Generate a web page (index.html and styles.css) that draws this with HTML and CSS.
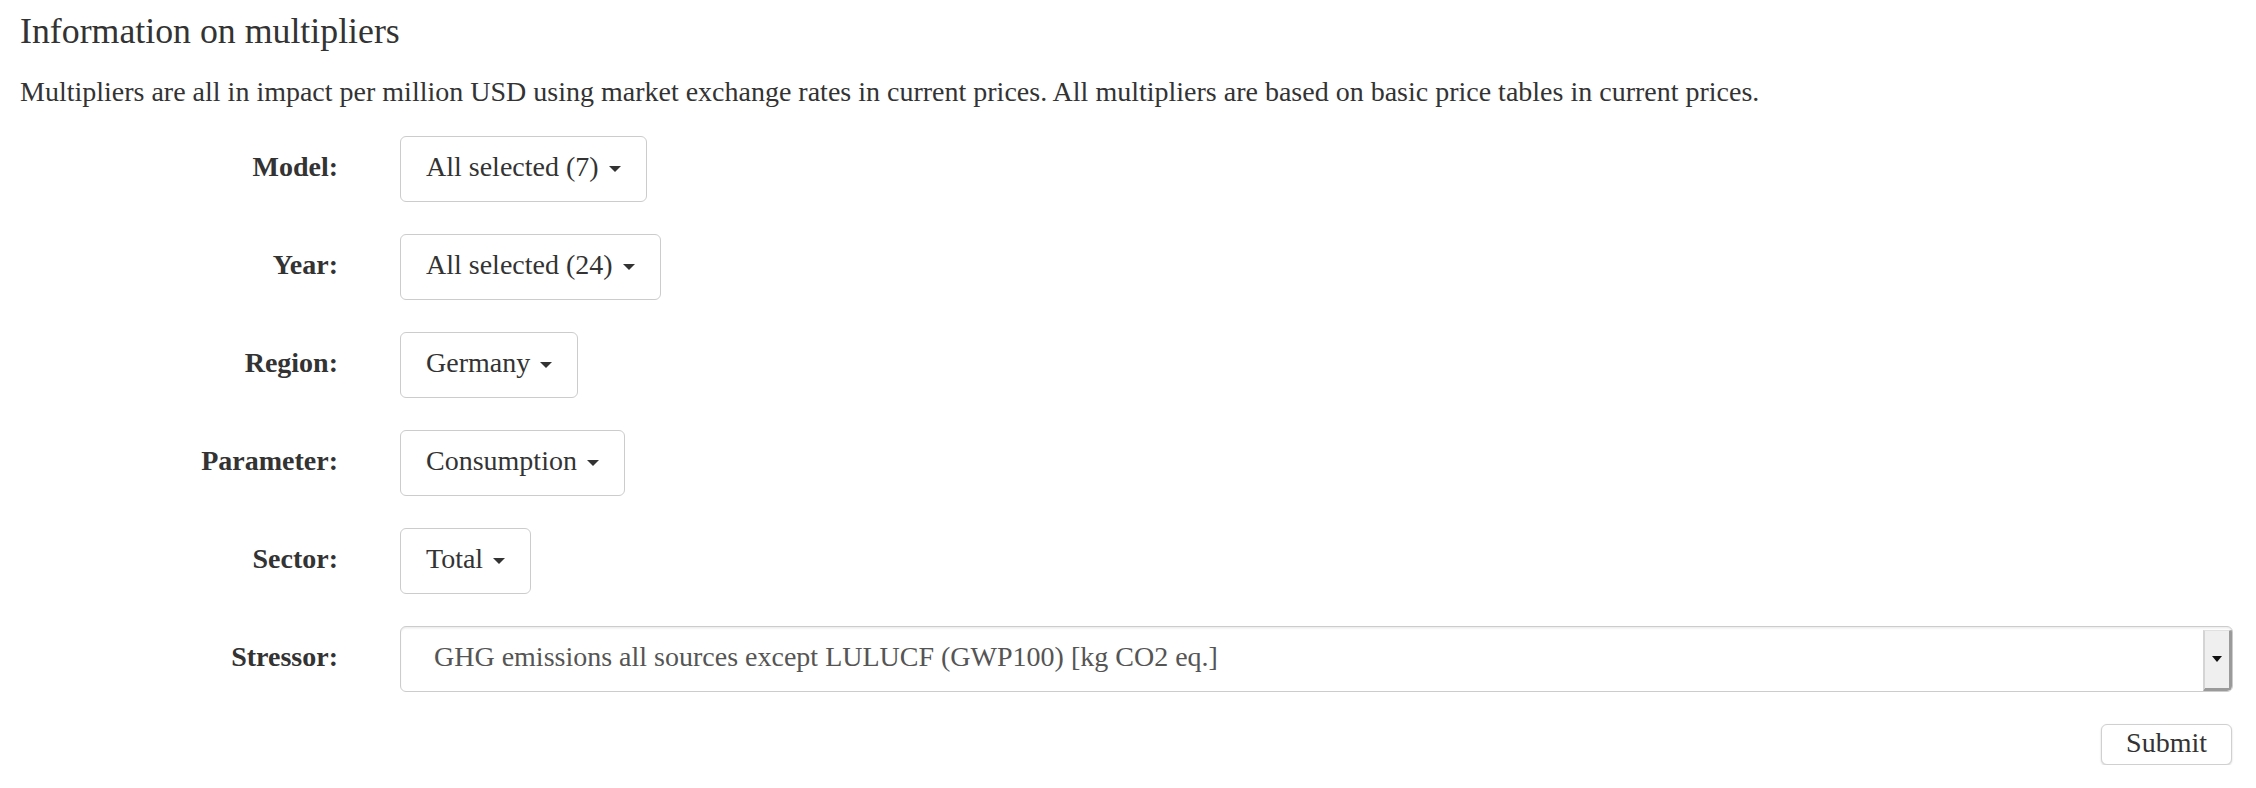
FILE: index.html
```html
<!DOCTYPE html>
<html lang="en">
<head>
<meta charset="utf-8">
<title>Information on multipliers</title>
<link rel="stylesheet" href="styles.css">
</head>
<body>
<div class="page">
  <h3 class="title">Information on multipliers</h3>
  <p class="intro">Multipliers are all in impact per million USD using market exchange rates in current prices. All multipliers are based on basic price tables in current prices.</p>
  <form class="form">
    <div class="row">
      <label class="label">Model:</label>
      <div class="control"><button type="button" class="dd">All selected (7)<span class="caret"></span></button></div>
    </div>
    <div class="row">
      <label class="label">Year:</label>
      <div class="control"><button type="button" class="dd">All selected (24)<span class="caret"></span></button></div>
    </div>
    <div class="row">
      <label class="label">Region:</label>
      <div class="control"><button type="button" class="dd">Germany<span class="caret"></span></button></div>
    </div>
    <div class="row">
      <label class="label">Parameter:</label>
      <div class="control"><button type="button" class="dd">Consumption<span class="caret"></span></button></div>
    </div>
    <div class="row">
      <label class="label">Sector:</label>
      <div class="control"><button type="button" class="dd">Total<span class="caret"></span></button></div>
    </div>
    <div class="row">
      <label class="label">Stressor:</label>
      <div class="control">
        <div class="select">
          <span class="select-text">GHG emissions all sources except LULUCF (GWP100) [kg CO2 eq.]</span>
          <span class="select-arrow"><span class="arrow-tri"></span></span>
        </div>
      </div>
    </div>
    <div class="actions">
      <button type="submit" class="submit">Submit</button>
    </div>
  </form>
</div>
</body>
</html>
```

FILE: styles.css
```css
html, body {
  margin: 0;
  padding: 0;
  background: #fff;
}

body {
  font-family: "Liberation Serif", "Times New Roman", serif;
  color: #333;
  font-size: 28px;
}

.page {
  padding: 12px 23px 0 20px;
}

.title {
  margin: 0;
  font-size: 35.8px;
  line-height: 38px;
  font-weight: normal;
  color: #333;
}

.intro {
  margin: 23px 0 0;
  font-size: 28px;
  line-height: 38.6px;
  white-space: nowrap;
}

.form {
  margin-top: 24px;
}

.row {
  display: grid;
  grid-template-columns: 318px 1fr;
  column-gap: 62px;
  align-items: center;
  height: 66px;
  margin-bottom: 32px;
}

.label {
  text-align: right;
  font-weight: bold;
  font-size: 28px;
  color: #333;
  padding-bottom: 3px;
}

.control {
  display: flex;
  align-items: center;
}

.dd {
  display: inline-flex;
  align-items: center;
  height: 66px;
  box-sizing: border-box;
  padding: 0 25px 3px 25px;
  border: 1.5px solid #ccc;
  border-radius: 6px;
  background: #fff;
  font-family: "Liberation Serif", "Times New Roman", serif;
  font-size: 28px;
  color: #333;
  cursor: pointer;
}

.caret {
  display: inline-block;
  width: 0;
  height: 0;
  margin-left: 10px;
  margin-top: 3px;
  border-top: 6.5px solid #333;
  border-left: 6.5px solid transparent;
  border-right: 6.5px solid transparent;
}

.select {
  flex: 1;
  display: flex;
  align-items: stretch;
  height: 66px;
  box-sizing: border-box;
  border: 1.5px solid #ccc;
  border-radius: 6px;
  background: #fff;
  box-shadow: inset 0 1.5px 1.5px rgba(0, 0, 0, 0.075);
  overflow: hidden;
}

.select-text {
  flex: 1;
  display: flex;
  align-items: center;
  padding-left: 33px;
  padding-bottom: 3px;
  font-size: 28px;
  color: #555;
  white-space: nowrap;
}

.select-arrow {
  width: 24px;
  margin: 3px 0 0;
  display: flex;
  align-items: center;
  justify-content: center;
  background: #efefef;
  border-left: 2px solid #d4d4d4;
  border-right: 3px solid #9a9a9a;
  border-bottom: 3px solid #9a9a9a;
  border-top: 1px solid #e0e0e0;
  border-bottom-right-radius: 4px;
}

.arrow-tri {
  width: 0;
  height: 0;
  border-top: 6px solid #111;
  border-left: 5px solid transparent;
  border-right: 5px solid transparent;
}

.actions {
  display: flex;
  justify-content: flex-end;
  margin-top: 1px;
}

.submit {
  height: 41px;
  box-sizing: border-box;
  padding: 0 24px 2px;
  border: 1px solid #d0d0d0;
  border-radius: 6px;
  background: #fff;
  box-shadow: 0 1px 2px rgba(0, 0, 0, 0.18);
  font-family: "Liberation Serif", "Times New Roman", serif;
  font-size: 28px;
  line-height: 1;
  color: #333;
  margin-right: 1px;
}
```
